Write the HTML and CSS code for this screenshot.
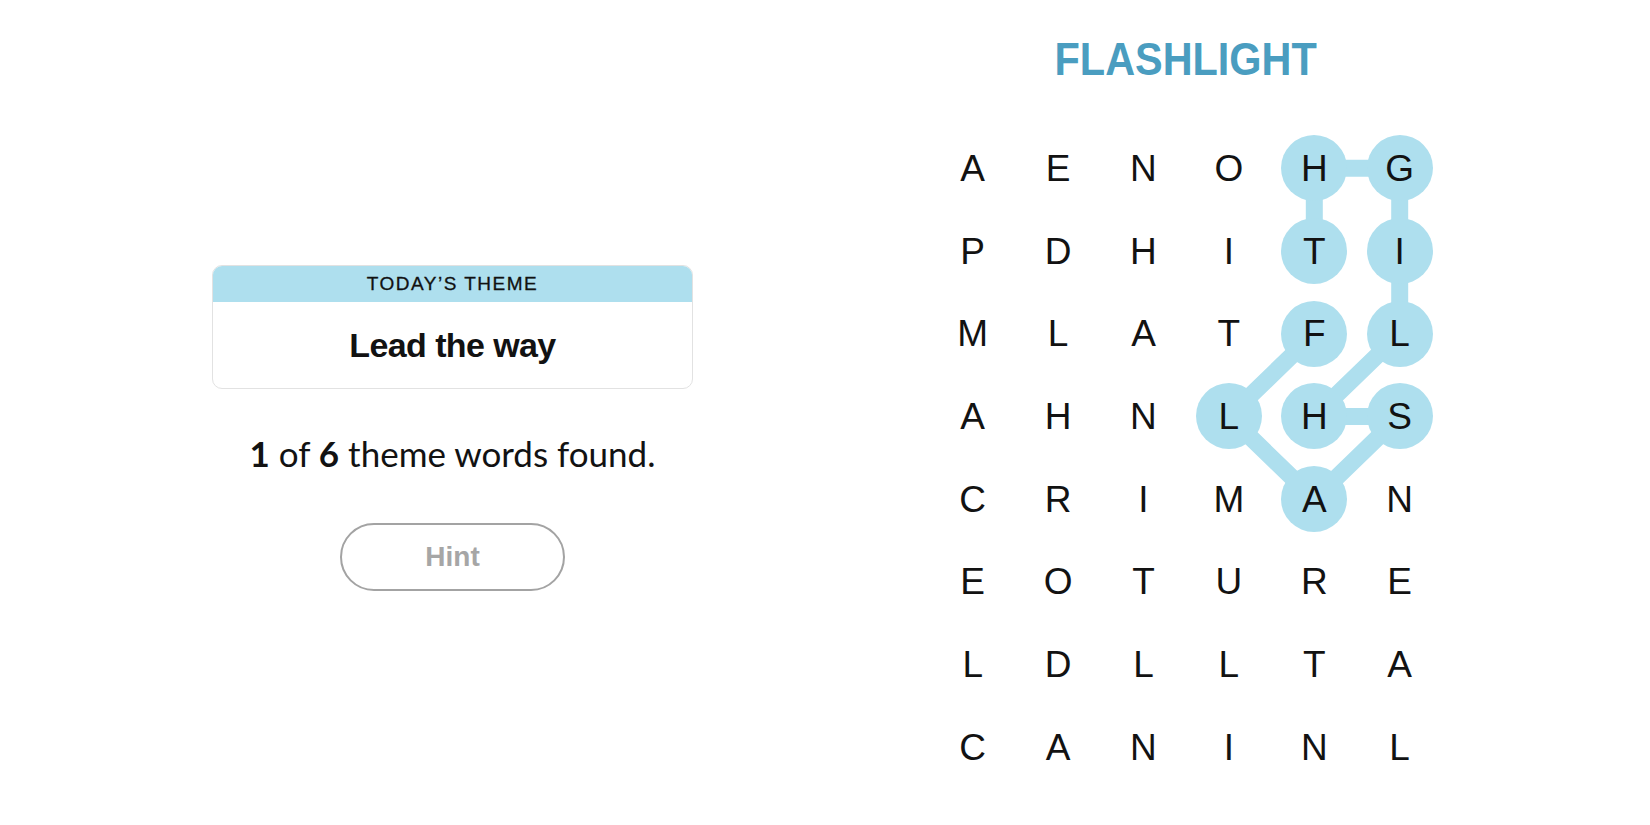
FILE: index.html
```html
<!DOCTYPE html>
<html lang="en">
<head>
    <title>Strands</title>
    <link rel="stylesheet" href="styles.css">
</head>
<body>
    <div class="game">
        <div class="side">
            <div class="theme-card">
                <div class="theme-label">Today’s Theme</div>
                <div class="theme-text">Lead the way</div>
            </div>
            <p class="progress"><b>1</b> of <b>6</b> theme words found.</p>
            <button class="hint-btn">Hint</button>
        </div>

        <div class="play">
            <h2 class="word"><span>FLASHLIGHT</span></h2>
            <div class="board">
                <svg class="paths" width="512" height="662" viewBox="0 0 512 662">
                    <polyline points="384.3,206.75 298.9,289.45 384.3,372.15 469.7,289.45 384.3,289.45 469.7,206.75 469.7,124.05 469.7,41.35 384.3,41.35 384.3,124.05" />
                </svg>
                <div class="grid">
                    <div class="cell"><span>A</span></div>
                    <div class="cell"><span>E</span></div>
                    <div class="cell"><span>N</span></div>
                    <div class="cell"><span>O</span></div>
                    <div class="cell found"><span>H</span></div>
                    <div class="cell found"><span>G</span></div>

                    <div class="cell"><span>P</span></div>
                    <div class="cell"><span>D</span></div>
                    <div class="cell"><span>H</span></div>
                    <div class="cell"><span>I</span></div>
                    <div class="cell found"><span>T</span></div>
                    <div class="cell found"><span>I</span></div>

                    <div class="cell"><span>M</span></div>
                    <div class="cell"><span>L</span></div>
                    <div class="cell"><span>A</span></div>
                    <div class="cell"><span>T</span></div>
                    <div class="cell found"><span>F</span></div>
                    <div class="cell found"><span>L</span></div>

                    <div class="cell"><span>A</span></div>
                    <div class="cell"><span>H</span></div>
                    <div class="cell"><span>N</span></div>
                    <div class="cell found"><span>L</span></div>
                    <div class="cell found"><span>H</span></div>
                    <div class="cell found"><span>S</span></div>

                    <div class="cell"><span>C</span></div>
                    <div class="cell"><span>R</span></div>
                    <div class="cell"><span>I</span></div>
                    <div class="cell"><span>M</span></div>
                    <div class="cell found"><span>A</span></div>
                    <div class="cell"><span>N</span></div>

                    <div class="cell"><span>E</span></div>
                    <div class="cell"><span>O</span></div>
                    <div class="cell"><span>T</span></div>
                    <div class="cell"><span>U</span></div>
                    <div class="cell"><span>R</span></div>
                    <div class="cell"><span>E</span></div>

                    <div class="cell"><span>L</span></div>
                    <div class="cell"><span>D</span></div>
                    <div class="cell"><span>L</span></div>
                    <div class="cell"><span>L</span></div>
                    <div class="cell"><span>T</span></div>
                    <div class="cell"><span>A</span></div>

                    <div class="cell"><span>C</span></div>
                    <div class="cell"><span>A</span></div>
                    <div class="cell"><span>N</span></div>
                    <div class="cell"><span>I</span></div>
                    <div class="cell"><span>N</span></div>
                    <div class="cell"><span>L</span></div>
                </div>
            </div>
        </div>
    </div>
</body>
</html>
```

FILE: styles.css
```css
* {
    box-sizing: border-box;
    margin: 0;
    padding: 0;
}

body {
    font-family: 'Liberation Sans', Arial, sans-serif;
    background: #fff;
    color: #121212;
}

.game {
    display: flex;
    gap: 237px;
    padding-left: 212px;
    height: 825px;
    overflow: hidden;
}

/* left column */
.side {
    width: 481px;
    margin-top: 265px;
    display: flex;
    flex-direction: column;
    align-items: center;
}

.theme-card {
    width: 100%;
    border: 1px solid #e2e2e2;
    border-radius: 10px;
    overflow: hidden;
}

.theme-label {
    background: #aedfee;
    height: 36px;
    line-height: 36px;
    text-align: center;
    text-transform: uppercase;
    font-size: 19px;
    letter-spacing: 1.5px;
    color: #111;
    -webkit-text-stroke: 0.3px #111;
}

.theme-text {
    height: 86px;
    display: flex;
    align-items: center;
    justify-content: center;
    font-size: 34px;
    font-weight: 700;
    letter-spacing: -0.6px;
}

.progress {
    margin-top: 44px;
    font-family: Lato, 'Liberation Sans', sans-serif;
    font-size: 35px;
    line-height: 40px;
    color: #121212;
}

.progress b {
    font-weight: 700;
}

.hint-btn {
    margin-top: 50px;
    width: 225px;
    height: 68px;
    border: 2px solid #a3a3a3;
    border-radius: 34px;
    background: #fff;
    font-family: 'Liberation Sans', Arial, sans-serif;
    font-size: 28px;
    font-weight: 700;
    color: #a6a6a6;
}

/* right column */
.play {
    width: 512px;
    padding-top: 31px;
}

.word {
    text-align: center;
    font-size: 46px;
    line-height: 56px;
    font-weight: 700;
    color: #4a9dc0;
}

.word span {
    display: inline-block;
    transform: scaleX(0.9);
}

.board {
    position: relative;
    margin-top: 40px;
}

.paths {
    position: absolute;
    top: 0;
    left: 0;
}

.paths polyline {
    fill: none;
    stroke: #aedfee;
    stroke-width: 17;
    stroke-linejoin: round;
}

.grid {
    position: relative;
    display: grid;
    grid-template-columns: repeat(6, 85.4px);
    grid-auto-rows: 82.7px;
}

.cell {
    display: flex;
    align-items: center;
    justify-content: center;
}

.cell span {
    width: 66px;
    height: 66px;
    border-radius: 50%;
    display: flex;
    align-items: center;
    justify-content: center;
    font-size: 37px;
    line-height: 1;
    color: #121212;
}

.cell.found span {
    background: #aedfee;
}
```
